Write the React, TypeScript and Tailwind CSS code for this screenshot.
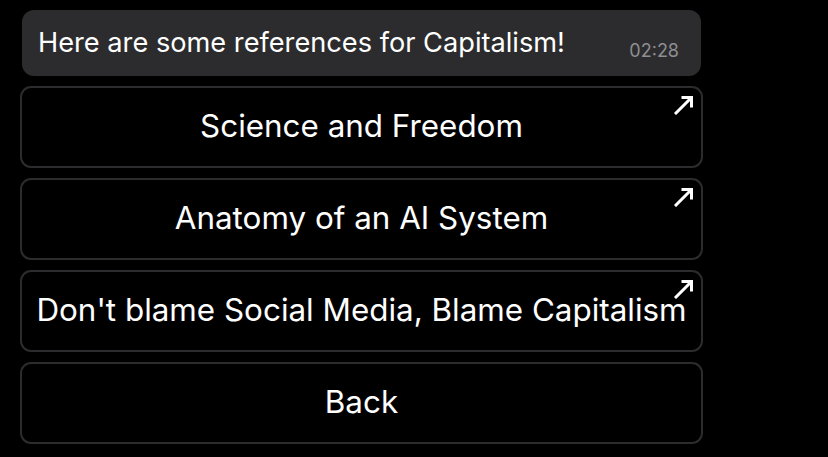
import React from 'react'

function ArrowIcon() {
    return (
        <svg width="20" height="20" viewBox="0 0 20 20" fill="none" stroke="white" strokeWidth="3">
            <path d="M2 18 L17 3" strokeLinecap="square" />
            <path d="M7.5 2.5 H17.5 V12.5" />
        </svg>
    )
}

function LinkButton({ label, external }: { label: string; external?: boolean }) {
    return (
        <div className="relative flex h-[82px] items-center justify-center rounded-[11px] border-2 border-[#2c2c2e] bg-black">
            <span className="text-[31.4px] leading-none text-white">{label}</span>
            {external && (
                <div className="absolute right-[7px] top-[7px]">
                    <ArrowIcon />
                </div>
            )}
        </div>
    )
}

export default function App() {
    const items = ['Science and Freedom', 'Anatomy of an AI System', "Don't blame Social Media, Blame Capitalism"]
    return (
        <div className="h-[457px] w-[828px] bg-black pl-[20px] pt-[10px]" style={{ fontFamily: 'Inter, "Noto Sans", sans-serif' }}>
            <div className="flex w-[683px] flex-col gap-[10px]">
                <div className="mx-[2px] flex h-[66px] items-center justify-between rounded-[12px] bg-[#2c2c2e] pl-[16px] pr-[22px]">
                    <span className="text-[27.2px] leading-none text-white">Here are some references for Capitalism!</span>
                    <span className="mt-[15px] text-[18px] leading-none text-[#8e8e93]">02:28</span>
                </div>
                {items.map((t) => (
                    <LinkButton key={t} label={t} external />
                ))}
                <LinkButton label="Back" />
            </div>
        </div>
    )
}
